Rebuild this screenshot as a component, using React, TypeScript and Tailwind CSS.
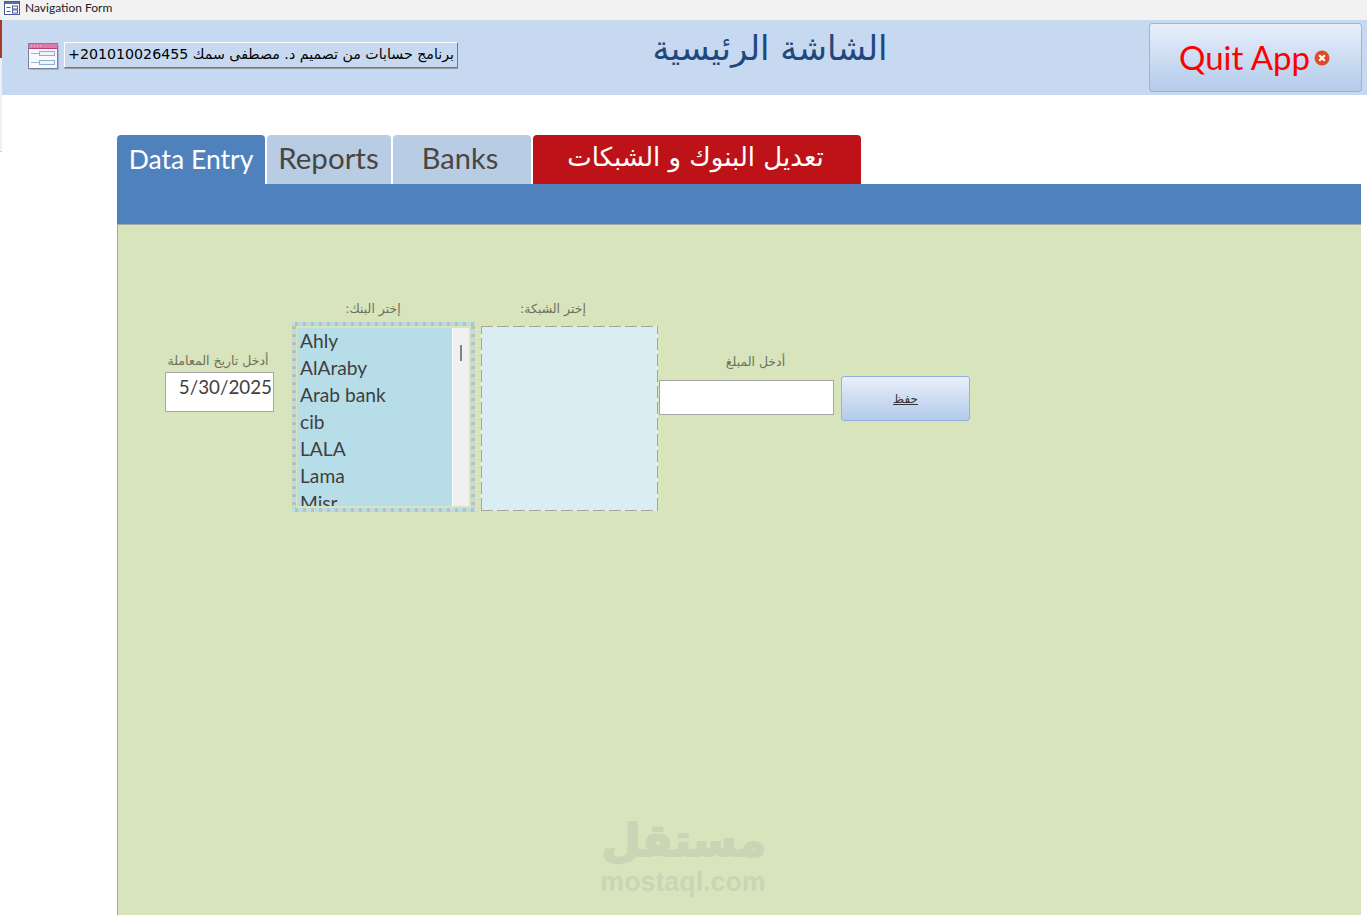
const banks = ["Ahly", "AlAraby", "Arab bank", "cib", "LALA", "Lama", "Misr"];

function FormIcon() {
  return (
    <svg width="32" height="27" viewBox="0 0 32 27">
      <rect x="2" y="3" width="29" height="24" fill="#8a90ac" opacity="0.55" />
      <rect x="0.5" y="0.5" width="29" height="25" fill="#f8f9fc" stroke="#7c8098" />
      <rect x="1" y="1" width="28" height="4" fill="#dd7aa9" />
      <path d="M1 5.5h28" stroke="#b8407c" />
      <path d="M3 3h1M6 3h1M9 3h1M12 3h1" stroke="#f6d5e5" />
      <path d="M3 10.5h8M3 19.5h8" stroke="#9db4d2" />
      <rect x="11.5" y="8.5" width="15" height="4" fill="#eef3fa" stroke="#8fb0d6" />
      <rect x="11.5" y="17.5" width="15" height="4" fill="#eef3fa" stroke="#8fb0d6" />
    </svg>
  );
}

function TitleIcon() {
  return (
    <svg width="16" height="14" viewBox="0 0 16 14">
      <rect x="0.5" y="0.5" width="15" height="13" fill="#fff" stroke="#4a5a9a" />
      <rect x="1" y="1" width="14" height="2" fill="#5a6fb0" />
      <path d="M2.5 6.5h4M2.5 10.5h4" stroke="#4a5a9a" />
      <rect x="8.5" y="5" width="5" height="3" fill="#fff" stroke="#4a5a9a" />
      <rect x="8.5" y="9" width="5" height="3" fill="#fff" stroke="#4a5a9a" />
    </svg>
  );
}

function QuitIcon() {
  return (
    <svg width="16" height="16" viewBox="0 0 16 16">
      <circle cx="8" cy="8" r="7.5" fill="#df4b26" />
      <path d="M5.2 5.2l5.6 5.6M10.8 5.2l-5.6 5.6" stroke="#fff" strokeWidth="2.2" />
    </svg>
  );
}

function Label({ children, className }: { children: string; className: string }) {
  return (
    <div
      dir="rtl"
      className={`text-center font-['DejaVu_Sans',sans-serif] text-[12.5px] leading-[14px] whitespace-nowrap text-[#6f6f5c] ${className}`}
    >
      {children}
    </div>
  );
}

export default function App() {
  return (
    <div className="relative h-[915px] overflow-hidden bg-white font-['Lato','DejaVu_Sans',sans-serif]">
      {/* title bar */}
      <div className="flex h-5 items-center gap-[5px] bg-[#f2f2f2] pb-[5px] pl-1">
        <TitleIcon />
        <span className="text-xs text-[#222]">Navigation Form</span>
      </div>

      {/* window edge behind the form */}
      <div className="absolute top-5 left-0 h-[132px] w-[2px] border-b border-[#d8d0b0] bg-[#f0f0f0]">
        <div className="h-[38px] bg-[#a8392a]" />
      </div>

      {/* header */}
      <div className="ml-[2px] flex h-[75px] bg-[#c6d9f1]">
        <div className="mt-[22px] ml-[26px] flex items-start gap-[4px]">
          <div className="mt-[1px]">
            <FormIcon />
          </div>
          <div
            dir="rtl"
            className="flex h-[26px] w-[394px] items-center border border-t-white border-r-[#777] border-b-[#777] border-l-white bg-[#c6d9f1] px-[3px] font-['DejaVu_Sans',sans-serif] text-[14.2px] whitespace-nowrap text-black shadow-[0_1px_0_#999]"
          >
            برنامج حسابات من تصميم د. مصطفى سمك 201010026455+
          </div>
        </div>
        <div
          dir="rtl"
          className="ml-[194px] w-[236px] pt-[4px] text-center font-['DejaVu_Sans',sans-serif] text-[34px] leading-[48px] whitespace-nowrap text-[#1f497d]"
        >
          الشاشة الرئيسية
        </div>
        <div className="mt-[3px] ml-[261px] flex h-[69px] w-[213px] items-center justify-center gap-[4px] rounded-[3px] border border-[#9ab5d8] bg-gradient-to-b from-[#e8effa] to-[#b3cbeb] pr-[2px] text-[33px] text-[#ff0000]">
          <span>Quit App</span>
          <QuitIcon />
        </div>
      </div>

      {/* navigation */}
      <div className="mt-10 ml-[117px] w-[1244px]">
        <div className="flex h-[49px] gap-[2px]">
          <div className="flex w-[148px] items-center justify-center rounded-t-[4px] bg-[#4f81bd] pt-[1px] text-[26.5px] text-white">
            Data Entry
          </div>
          <div className="flex w-[124px] items-center justify-center rounded-t-[4px] bg-[#b8cce4] pr-[1px] pb-[3px] text-[29.5px] text-[#4a4540]">
            Reports
          </div>
          <div className="flex w-[138px] items-center justify-center rounded-t-[4px] bg-[#b8cce4] pr-[4px] pb-[3px] text-[29px] text-[#4a4540]">
            Banks
          </div>
          <div
            dir="rtl"
            className="flex w-[328px] items-center justify-center rounded-t-[4px] bg-[#bd1318] pr-[3px] pb-1 font-['DejaVu_Sans',sans-serif] text-[26px] whitespace-nowrap text-white"
          >
            تعديل البنوك و الشبكات
          </div>
        </div>
        <div className="h-10 bg-[#4f81bd]" />

        {/* form body */}
        <div className="relative flex h-[691px] items-start border-t border-l border-[#a6a6a6] bg-[#d8e4bc] pl-[47px]">
          <div className="mt-[129px] w-[109px] shrink-0">
            <Label className="mr-[3px] mb-[4px]">أدخل تاريخ المعاملة</Label>
            <div className="h-10 border border-[#a6a6a6] bg-white pr-[1px] text-right text-[18.8px] leading-[27px] text-[#3f3f3f]">
              5/30/2025
            </div>
          </div>

          <div className="mt-[77px] ml-[18px] w-[183px] shrink-0">
            <Label className="mb-[6px] pr-[21px]">إختر البنك:</Label>
            <div className="bg-[repeating-linear-gradient(90deg,#b7dde8_0_3px,#c4bdb0_3px_6px,#b7dde8_6px_8px)] py-1">
              <div className="bg-[repeating-linear-gradient(0deg,#b7dde8_0_3px,#c4bdb0_3px_6px,#b7dde8_6px_8px)] px-1">
                <div className="bg-[#d8e4bc] py-[2px] pr-[2px] pl-[1px]">
                  <div className="flex h-[178px] overflow-hidden bg-[#b7dde8]">
                    <div className="-mt-[1px] flex-1 pl-[3px] text-[19.2px] leading-[27px] text-[#3f3f3f]">
                      {banks.map((bank) => (
                        <div key={bank}>{bank}</div>
                      ))}
                    </div>
                    <div className="w-[17px] border-l border-white bg-[#f0f0f0] pt-[17px] pl-[7px]">
                      <div className="h-4 w-[2px] bg-[#7f8090]" />
                    </div>
                  </div>
                </div>
              </div>
            </div>
          </div>

          <div className="mt-[77px] ml-[6px] w-[177px] shrink-0">
            <Label className="mb-[10px] pr-[33px]">إختر الشبكة:</Label>
            <div className="bg-[repeating-linear-gradient(90deg,#a6a697_0_12px,#e6f0e4_12px_16px)] py-[1px]">
              <div className="bg-[repeating-linear-gradient(0deg,#a6a697_0_12px,#e6f0e4_12px_16px)] px-[1px]">
                <div className="h-[183px] bg-[#daedf3]" />
              </div>
            </div>
          </div>

          <div className="mt-[130px] ml-[1px] w-[175px] shrink-0">
            <Label className="mb-[11px] pl-[18px]">أدخل المبلغ</Label>
            <div className="h-[35px] border border-[#a6a6a6] bg-white" />
          </div>

          <div className="mt-[151px] ml-[7px] flex h-[45px] w-[129px] shrink-0 items-center justify-center rounded-[3px] border border-[#92b1dc] bg-gradient-to-b from-[#e8effa] to-[#b3cbeb] font-['DejaVu_Sans',sans-serif] text-xs text-[#333] underline">
            حفظ
          </div>

          {/* watermark */}
          <div className="absolute top-[588px] left-[482px] w-[166px] text-center font-bold text-[#c9d6b6]">
            <div
              dir="rtl"
              className="pl-[3px] font-['DejaVu_Sans',sans-serif] text-[45px] leading-[55px] whitespace-nowrap [-webkit-text-stroke:2px_#c9d6b6]"
            >
              مستقل
            </div>
            <div className="font-['Liberation_Sans',sans-serif] text-[26.8px] leading-[28px]">mostaql.com</div>
          </div>
        </div>
      </div>
    </div>
  );
}
